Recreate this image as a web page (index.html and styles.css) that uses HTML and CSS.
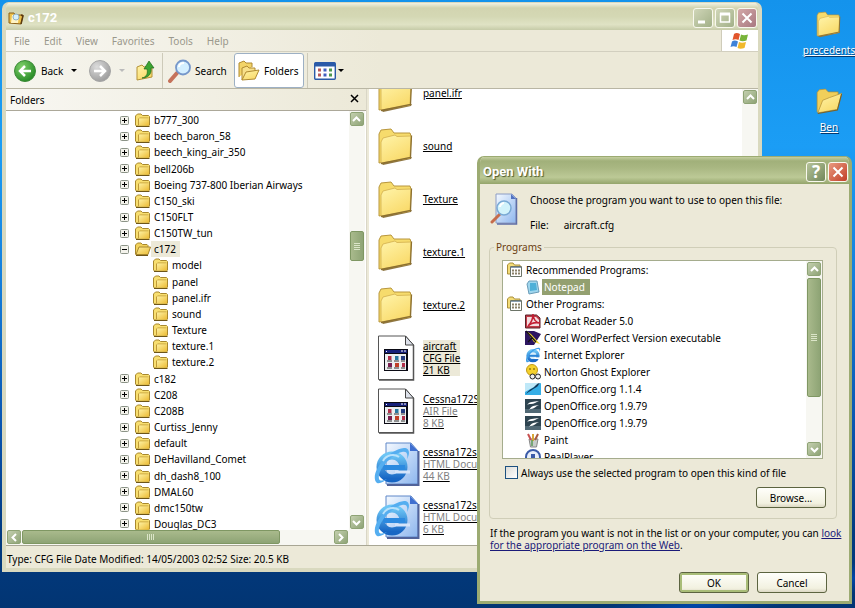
FILE: index.html
```html
<!DOCTYPE html>
<html lang="en">
<head>
<meta charset="utf-8">
<title>c172</title>
<link rel="stylesheet" href="styles.css">
</head>
<body>
<svg class="defs" aria-hidden="true">
  <defs>
    <linearGradient id="gy" x1="0" y1="0" x2="1" y2="1"><stop offset="0" stop-color="#fdf0a0"/><stop offset="1" stop-color="#ecbb34"/></linearGradient>
    <linearGradient id="gl" x1="0" y1="0" x2="0.6" y2="1"><stop offset="0" stop-color="#fff4aa"/><stop offset="1" stop-color="#f9da6a"/></linearGradient>
    <linearGradient id="gb" x1="0" y1="0" x2="1" y2="1"><stop offset="0" stop-color="#f4f9ff"/><stop offset="1" stop-color="#8db6ee"/></linearGradient>
    <linearGradient id="ge" x1="0" y1="0" x2="0" y2="1"><stop offset="0" stop-color="#6cc5f5"/><stop offset="1" stop-color="#1766c4"/></linearGradient>
    <radialGradient id="gg" cx="0.35" cy="0.3" r="0.8"><stop offset="0" stop-color="#7fd06a"/><stop offset="1" stop-color="#1f8420"/></radialGradient>
    <radialGradient id="gr" cx="0.35" cy="0.3" r="0.8"><stop offset="0" stop-color="#dcdcdc"/><stop offset="1" stop-color="#979797"/></radialGradient>
    <symbol id="folder" viewBox="0 0 16 16">
      <path d="M.5 13V4L2.500 2H6l1.500 1.500h6l1 1V13l-1 1H1.500z" fill="#f8df70" stroke="#a8882e"/>
      <path d="M3.500 13V7l1-1h9" fill="none" stroke="#c09a38"/>
      <path d="M4 6.500h10v7H4z" fill="url(#gy)"/>
      <path d="M1 14.500h13.500" stroke="#6d5518"/>
    </symbol>
    <symbol id="folder-open" viewBox="0 0 16 16">
      <path d="M.5 13.500V4L2.500 2H6l1.500 1.500H12l1 1V7" fill="#f2d25c" stroke="#a8882e"/>
      <path d="M1 13.500L4 6h11.500L13 13.500z" fill="url(#gy)" stroke="#a8882e"/>
      <path d="M1 14.500h12" stroke="#6d5518"/>
    </symbol>
    <symbol id="big-folder" viewBox="0 0 40 40">
      <path d="M5 37L36 31 35 33 7 39z" fill="#8f7744"/>
      <path d="M3 37V8L5 4l10-1 3 4 16 0 1 3-1 22z" fill="#f6db6c" stroke="#b8963c"/>
      <path d="M5 37V16l2-4 12-3 2 1.500 14-.5-1 22z" fill="url(#gl)" stroke="#d2ae4c" stroke-width=".8"/>
      <path d="M35.500 9.500l-1 22L5 37.500" fill="none" stroke="#8c7030" stroke-width="1.300"/>
    </symbol>
    <symbol id="big-folder-open" viewBox="0 0 40 40">
      <path d="M3 36V8L6 4l9-1 4 4h14v8" fill="#f1cf5a" stroke="#b28e34"/>
      <path d="M4 37L11 19l10-4 17-6-6 23z" fill="url(#gl)" stroke="#b28e34"/>
      <path d="M4 38l28-5 6-23" fill="none" stroke="#7c6226" stroke-width="1.500"/>
    </symbol>
    <symbol id="cfg" viewBox="0 0 40 46">
      <path d="M2.500 1h27l8 9v34.500h-35z" fill="#fff" stroke="#555"/>
      <path d="M37.500 10v35H3" fill="none" stroke="#555" stroke-width="1.500"/>
      <path d="M29.500 1v9h8z" fill="#dde1ea" stroke="#444"/>
      <path d="M8 14h24v22H8z" fill="#0a0a14"/><path d="M9 15h22v3H9z" fill="#16207a"/>
      <path d="M25 16h2m1 0h2M10 16.500h1" stroke="#fff"/>
      <path d="M9 19h21v16H9z" fill="#eceff0"/>
      <path d="M12 21h3.500v4H12zM26 28h3v4h-3z" fill="#b1304a"/><path d="M19 21h3.500v4H19z" fill="#2878a0"/><path d="M25 21h4v4h-4z" fill="#243b80"/><path d="M12 28h4v4h-4z" fill="#792050"/><path d="M19 28h4v4h-4z" fill="#c04028"/>
      <path d="M11 26h5m2 0h5m2 0h4M11 33h5m2 0h5m2 0h4" stroke="#333"/>
    </symbol>
    <symbol id="ie" viewBox="0 0 24 24">
      <circle cx="12" cy="13" r="7.500" fill="#d8eefb" stroke="url(#ge)" stroke-width="5"/>
      <path d="M6 13.200h14" stroke="#2b84d6" stroke-width="3"/>
      <path d="M14 15.500h9v2.500h-9z" fill="#fff"/>
      <path d="M2 22C-1 15 10 2 20 1c4 0 3 4 1 7 1-3 1-5-2-5C12 4 3 14 4 20c0 2 4 1 5 0-2 2-6 4-7 2z" fill="#3d9ee8"/>
    </symbol>
    <symbol id="html" viewBox="0 0 48 46">
      <path d="M13 2h25l7 8v33H13z" fill="url(#gb)" stroke="#5f87c8"/>
      <path d="M45.500 10v34H14" fill="none" stroke="#51639a" stroke-width="2"/>
      <path d="M37 2v8h8z" fill="#3f6fd0"/>
      <circle cx="19" cy="26" r="11.500" fill="none" stroke="url(#ge)" stroke-width="8"/>
      <path d="M10 26.500h22" stroke="#2c8ae0" stroke-width="5"/>
      <path d="M22 29.500h15v3H22z" fill="#d5e4fa"/>
      <path d="M3 41C-3 32 14 9 31 7c6 0 6 6 3 11 1-5 0-8-5-7C18 13 4 30 6 38c1 3 7 1 9-1-4 4-10 7-12 4z" fill="#55aef0"/>
      <path d="M10 20c3-6 11-8 16-4" fill="none" stroke="#b9e2fb" stroke-width="2"/>
    </symbol>
    <symbol id="plus" viewBox="0 0 9 9"><rect x=".5" y=".5" width="8" height="8" rx="1" fill="#f4f3ec" stroke="#8c9488"/><path d="M2 4.500h5M4.500 2v5" stroke="#000"/></symbol>
    <symbol id="minus" viewBox="0 0 9 9"><rect x=".5" y=".5" width="8" height="8" rx="1" fill="#f4f3ec" stroke="#8c9488"/><path d="M2 4.500h5" stroke="#000"/></symbol>
    <symbol id="chev" viewBox="0 0 9 9"><path d="M1 6l3.500-3.500L8 6" fill="none" stroke="#fff" stroke-width="2"/></symbol>
    <symbol id="progs" viewBox="0 0 16 16">
      <path d="M.5 12V3l2-2H6l1.500 2H13v9z" fill="#f3dc78" stroke="#a98e3a"/>
      <path d="M3.500 4.500h11v10h-11z" fill="#fff" stroke="#6c7468"/><path d="M4 5.500h10" stroke="#889cb0"/>
      <path d="M5 8.500h2m1 0h2m1 0h2M5 11.500h2m1 0h2m1 0h2" stroke="#8a8068" stroke-width="2"/>
    </symbol>
    <symbol id="oo" viewBox="0 0 16 16"><path d="M0 1h16v14H0z" fill="#2e4450"/><path d="M0 11h16v4H0z" fill="#506874"/><path d="M2 7c3-4 6-3 12-4-3 1-5 3-8 3-2 0-3 0-4 1zm2 5c3-5 5-4 10-5-3 1-5 4-8 4-1 0-1 0-2 1z" fill="#fff"/></symbol>
    <symbol id="lens" viewBox="0 0 24 24">
      <path d="M2 22l7-8" stroke="#c5725a" stroke-width="4" stroke-linecap="round"/>
      <circle cx="15" cy="8.500" r="7" fill="#d4efff" stroke="#7697ca" stroke-width="1.800"/>
      <path d="M11 8c0-3 3-4 5-4" fill="none" stroke="#fff" stroke-width="2"/>
    </symbol>
  </defs>
</svg>

<main class="desktop">
  <a class="shortcut precedents" href="#"><svg><use href="#big-folder"/></svg><span>precedents</span></a>
  <a class="shortcut ben" href="#"><svg><use href="#big-folder-open"/></svg><span>Ben</span></a>

  <section class="window" aria-label="c172">
    <header class="titlebar">
      <svg class="i16" viewBox="0 0 16 16"><path d="M1 13V3h5l1 2h8l-2 9z" fill="#edc04a" stroke="#8a5f18"/><path d="M4 5h7l-1 8H3z" fill="#fff4c4"/><circle cx="8" cy="7" r="3" fill="#d8f0fa" stroke="#8fb2c8"/><path d="M13 5l2 1-2 8" fill="none" stroke="#5a3a10" stroke-width="1.500"/></svg>
      <h1>c172</h1>
      <div class="caption-buttons">
        <button aria-label="Minimize"><svg viewBox="0 0 18 18"><path d="M4 13h7" stroke="#fff" stroke-width="3"/></svg></button>
        <button aria-label="Maximize"><svg viewBox="0 0 18 18"><path d="M4.500 5h9v8h-9z" fill="none" stroke="#fff" stroke-width="1.500"/><path d="M4 5h10" stroke="#fff" stroke-width="3"/></svg></button>
        <button class="close" aria-label="Close"><svg viewBox="0 0 18 18"><path d="M4.500 4.500l9 9m0-9l-9 9" stroke="#fff" stroke-width="2"/></svg></button>
      </div>
    </header>
    <nav class="menubar">
      <button>File</button><button>Edit</button><button>View</button><button>Favorites</button><button>Tools</button><button>Help</button>
      <span class="flag"><svg viewBox="0 0 20 18"><path d="M4 2c2-1.500 4-1 6 0L8.500 8C6.500 7 4.500 7 2.500 8z" fill="#e2562c"/><path d="M11 2.500c2 1 4 1 7 0L16.500 8.500c-3 1-5 1-7 0z" fill="#78b43a"/><path d="M2 9.500c2-1.500 4-1 6 0L6.500 15c-2-1-4-1-6 0z" fill="#3e82d8"/><path d="M9 10c2 1 4 1 7 0l-1.500 6c-3 1-5 1-7 0z" fill="#f1b92c"/></svg></span>
    </nav>
    <div class="toolbar">
      <button class="back"><svg class="i22" viewBox="0 0 22 22"><circle cx="11" cy="11" r="10.500" fill="url(#gg)" stroke="#3c8a38"/><path d="M17 11H6m5-5l-5 5 5 5" fill="none" stroke="#fff" stroke-width="2.500"/></svg><span>Back</span><i class="arrow"></i></button>
      <button class="forward" aria-label="Forward" disabled><svg class="i22" viewBox="0 0 22 22"><circle cx="11" cy="11" r="10.500" fill="url(#gr)" stroke="#a5a5a5"/><path d="M5 11h11m-5-5l5 5-5 5" fill="none" stroke="#fff" stroke-width="2.500"/></svg><i class="arrow dim"></i></button>
      <button class="up" aria-label="Up"><svg class="i22" viewBox="0 0 22 22"><path d="M2 20V7l5-2 2 2 8-1v11z" fill="url(#gl)" stroke="#b59236"/><path d="M7 18c5-1 6-5 5-9H9l5-8 5 7h-3c1 6-3 10-9 10z" fill="#3ca532" stroke="#1f6a1c" stroke-width=".7"/></svg></button>
      <button class="search"><svg class="i24"><use href="#lens"/></svg>Search</button>
      <button class="folders" aria-pressed="true"><svg class="i22" viewBox="0 0 22 22"><path d="M1 17V3l5-2 2 2 6 0v4" fill="#f3d468" stroke="#b08a30"/><path d="M4 20V8l5-2 2 2h6v3" fill="#f8e08a" stroke="#b08a30"/><path d="M4 20l4-8 13-2-4 9z" fill="url(#gl)" stroke="#b08a30"/></svg>Folders</button>
      <button class="views" aria-label="Views"><svg viewBox="0 0 22 18"><rect x=".7" y=".7" width="20.600" height="16.600" rx="1" fill="#fff" stroke="#2a5aa8" stroke-width="1.400"/><path d="M1 2.500h20" stroke="#2a5aa8" stroke-width="4"/><path d="M4 8h3m-3 5h3" stroke="#b85858" stroke-width="3"/><path d="M9.500 8h3m-3 5h3" stroke="#405fc0" stroke-width="3"/><path d="M15 8h3m-3 5h3" stroke="#4d984d" stroke-width="3"/></svg><i class="arrow"></i></button>
    </div>
    <div class="panes">
      <div class="folder-pane">
        <div class="pane-head"><h2>Folders</h2><button aria-label="Close folders"><svg viewBox="0 0 9 9"><path d="M1 1l7 7m0-7L1 8" stroke="#000" stroke-width="1.500"/></svg></button></div>
        <div class="tree-area">
          <ul class="tree">
            <li><svg class="box"><use href="#plus"/></svg><svg class="i16"><use href="#folder"/></svg><span>b777_300</span></li>
            <li><svg class="box"><use href="#plus"/></svg><svg class="i16"><use href="#folder"/></svg><span>beech_baron_58</span></li>
            <li><svg class="box"><use href="#plus"/></svg><svg class="i16"><use href="#folder"/></svg><span>beech_king_air_350</span></li>
            <li><svg class="box"><use href="#plus"/></svg><svg class="i16"><use href="#folder"/></svg><span>bell206b</span></li>
            <li><svg class="box"><use href="#plus"/></svg><svg class="i16"><use href="#folder"/></svg><span>Boeing 737-800 Iberian Airways</span></li>
            <li><svg class="box"><use href="#plus"/></svg><svg class="i16"><use href="#folder"/></svg><span>C150_ski</span></li>
            <li><svg class="box"><use href="#plus"/></svg><svg class="i16"><use href="#folder"/></svg><span>C150FLT</span></li>
            <li><svg class="box"><use href="#plus"/></svg><svg class="i16"><use href="#folder"/></svg><span>C150TW_tun</span></li>
            <li><svg class="box"><use href="#minus"/></svg><svg class="i16"><use href="#folder-open"/></svg><span class="current">c172</span></li>
            <li class="child"><svg class="i16"><use href="#folder"/></svg><span>model</span></li>
            <li class="child"><svg class="i16"><use href="#folder"/></svg><span>panel</span></li>
            <li class="child"><svg class="i16"><use href="#folder"/></svg><span>panel.ifr</span></li>
            <li class="child"><svg class="i16"><use href="#folder"/></svg><span>sound</span></li>
            <li class="child"><svg class="i16"><use href="#folder"/></svg><span>Texture</span></li>
            <li class="child"><svg class="i16"><use href="#folder"/></svg><span>texture.1</span></li>
            <li class="child"><svg class="i16"><use href="#folder"/></svg><span>texture.2</span></li>
            <li><svg class="box"><use href="#plus"/></svg><svg class="i16"><use href="#folder"/></svg><span>c182</span></li>
            <li><svg class="box"><use href="#plus"/></svg><svg class="i16"><use href="#folder"/></svg><span>C208</span></li>
            <li><svg class="box"><use href="#plus"/></svg><svg class="i16"><use href="#folder"/></svg><span>C208B</span></li>
            <li><svg class="box"><use href="#plus"/></svg><svg class="i16"><use href="#folder"/></svg><span>Curtiss_Jenny</span></li>
            <li><svg class="box"><use href="#plus"/></svg><svg class="i16"><use href="#folder"/></svg><span>default</span></li>
            <li><svg class="box"><use href="#plus"/></svg><svg class="i16"><use href="#folder"/></svg><span>DeHavilland_Comet</span></li>
            <li><svg class="box"><use href="#plus"/></svg><svg class="i16"><use href="#folder"/></svg><span>dh_dash8_100</span></li>
            <li><svg class="box"><use href="#plus"/></svg><svg class="i16"><use href="#folder"/></svg><span>DMAL60</span></li>
            <li><svg class="box"><use href="#plus"/></svg><svg class="i16"><use href="#folder"/></svg><span>dmc150tw</span></li>
            <li><svg class="box"><use href="#plus"/></svg><svg class="i16"><use href="#folder"/></svg><span>Douglas_DC3</span></li>
          </ul>
          <div class="vscroll tree-scroll">
            <button aria-label="Scroll up"><svg><use href="#chev"/></svg></button>
            <div class="track"><div class="thumb"></div></div>
            <button class="down" aria-label="Scroll down"><svg><use href="#chev"/></svg></button>
          </div>
        </div>
        <div class="hscroll">
          <button class="left" aria-label="Scroll left"><svg><use href="#chev"/></svg></button>
          <div class="track"><div class="thumb"></div></div>
          <button class="right" aria-label="Scroll right"><svg><use href="#chev"/></svg></button>
        </div>
      </div>
      <div class="file-pane">
        <ul class="files">
          <li><svg class="i40"><use href="#big-folder"/></svg><a href="#">panel.ifr</a></li>
          <li><svg class="i40"><use href="#big-folder"/></svg><a href="#">sound</a></li>
          <li><svg class="i40"><use href="#big-folder"/></svg><a href="#">Texture</a></li>
          <li><svg class="i40"><use href="#big-folder"/></svg><a href="#">texture.1</a></li>
          <li><svg class="i40"><use href="#big-folder"/></svg><a href="#">texture.2</a></li>
          <li><svg class="doc"><use href="#cfg"/></svg><a href="#" class="chosen">aircraft<br>CFG File<br>21 KB</a></li>
          <li><svg class="doc"><use href="#cfg"/></svg><a href="#">Cessna172SP.air<br><small>AIR File<br>8 KB</small></a></li>
          <li><svg class="web"><use href="#html"/></svg><a href="#">cessna172s_check<br><small>HTML Document<br>44 KB</small></a></li>
          <li><svg class="web"><use href="#html"/></svg><a href="#">cessna172s_ref<br><small>HTML Document<br>6 KB</small></a></li>
        </ul>
        <div class="vscroll">
          <button aria-label="Scroll up"><svg><use href="#chev"/></svg></button>
          <div class="track"></div>
          <button class="down" aria-label="Scroll down"><svg><use href="#chev"/></svg></button>
        </div>
      </div>
    </div>
    <footer class="status">Type: CFG File Date Modified: 14/05/2003 02:52 Size: 20.5 KB</footer>
  </section>

  <section class="dialog" role="dialog" aria-labelledby="dlg-title">
    <header class="titlebar">
      <h1 id="dlg-title">Open With</h1>
      <div class="caption-buttons">
        <button class="help" aria-label="Help">?</button>
        <button class="close" aria-label="Close"><svg viewBox="0 0 18 18"><path d="M4.500 4.500l9 9m0-9l-9 9" stroke="#fff" stroke-width="2"/></svg></button>
      </div>
    </header>
    <form class="dialog-body">
      <div class="intro">
        <svg class="intro-icon" viewBox="0 0 28 32"><path d="M6 1h16l4 4v25H6z" fill="url(#gb)" stroke="#8c9cc4"/><path d="M26.500 5v26H7" fill="none" stroke="#5e6ea6" stroke-width="1.500"/><path d="M21 1v5h5z" fill="#5272c0"/><path d="M2 29l8-8" stroke="#c56c4c" stroke-width="3" stroke-linecap="round"/><circle cx="14" cy="15" r="7" fill="#d2f3fb" stroke="#7aa9d4" stroke-width="1.500"/><path d="M10 14c0-2 2-4 4-4" fill="none" stroke="#fff" stroke-width="2"/></svg>
        <div><p>Choose the program you want to use to open this file:</p>
        <p class="file"><span>File:</span><span>aircraft.cfg</span></p></div>
      </div>
      <fieldset>
        <legend>Programs</legend>
        <div class="listbox">
          <ul>
            <li class="group"><svg class="i16"><use href="#progs"/></svg><span>Recommended Programs:</span></li>
            <li><svg class="i16" viewBox="0 0 16 16"><path d="M4 2h8l2 11-10 2L2 5z" fill="#9fd6ee" stroke="#6a9cb8"/><path d="M5 4h6l1 7-7 1z" fill="#4fb0d8"/></svg><span class="sel">Notepad</span></li>
            <li class="group"><svg class="i16"><use href="#progs"/></svg><span>Other Programs:</span></li>
            <li><svg class="i16" viewBox="0 0 16 16"><path d="M.5 2h11l3.500 3v10H.5z" fill="#c33a48" stroke="#5c2028"/><path d="M2 4h9l3 3v6H2z" fill="#f3dde0"/><path d="M3 13c3-3 5-7 5-12 0 5 3 9 7 9-5-1-9 0-12 3z" fill="none" stroke="#c31e34" stroke-width="1.500"/></svg><span>Acrobat Reader 5.0</span></li>
            <li><svg class="i16" viewBox="0 0 16 16"><path d="M0 1h16v14H0z" fill="#2d1660"/><path d="M9 15L16 4v11zM9 1h7v3z" fill="#fff"/><path d="M1 1l5 3 9 10-6-2z" fill="#f2d72e"/><path d="M1 1l10 11M3 12l4-4" stroke="#111" stroke-width="1.200"/></svg><span>Corel WordPerfect Version executable</span></li>
            <li><svg class="i16"><use href="#ie"/></svg><span>Internet Explorer</span></li>
            <li><svg class="i16" viewBox="0 0 16 16"><circle cx="7" cy="6" r="5.500" fill="#f5d12c" stroke="#c09a18"/><path d="M5 4v2m4-2v2" stroke="#665000"/><circle cx="7.500" cy="12.500" r="2.500" fill="#eee" stroke="#222"/><circle cx="13" cy="12.500" r="2.500" fill="#eee" stroke="#222"/></svg><span>Norton Ghost Explorer</span></li>
            <li><svg class="i16" viewBox="0 0 16 16"><path d="M0 2h16v12H0z" fill="#35aee6"/><path d="M0 2h16L0 11z" fill="#bfe8f8"/><path d="M1 13c4-6 7-5 9-8 2-2 3-3 5-3-2 2-2 4-5 5-3 2-5 3-9 6z" fill="#123a5c"/></svg><span>OpenOffice.org 1.1.4</span></li>
            <li><svg class="i16"><use href="#oo"/></svg><span>OpenOffice.org 1.9.79</span></li>
            <li><svg class="i16"><use href="#oo"/></svg><span>OpenOffice.org 1.9.79</span></li>
            <li><svg class="i16" viewBox="0 0 16 16"><path d="M4 7h9l-1.500 8h-6z" fill="#c6ccca" stroke="#888"/><path d="M6 8L3 2" stroke="#c85050" stroke-width="2"/><path d="M8 9V2" stroke="#d8a838" stroke-width="2"/><path d="M10 8l3-6" stroke="#a8583c" stroke-width="2"/><path d="M7 14V8" stroke="#5a9a58" stroke-width="1.500"/></svg><span>Paint</span></li>
            <li><svg class="i16" viewBox="0 0 16 16"><circle cx="8" cy="8" r="7" fill="#e9effa" stroke="#3a5ba8" stroke-width="2"/><path d="M6 5h4v6H6z" fill="#3a5ba8"/></svg><span>RealPlayer</span></li>
          </ul>
          <div class="vscroll list-scroll">
            <button type="button" aria-label="Scroll up"><svg><use href="#chev"/></svg></button>
            <div class="track"><div class="thumb"></div></div>
            <button type="button" class="down" aria-label="Scroll down"><svg><use href="#chev"/></svg></button>
          </div>
        </div>
        <div class="check"><input type="checkbox" id="always"><label for="always">Always use the selected program to open this kind of file</label></div>
        <div class="row-end"><button type="button" class="btn">Browse...</button></div>
      </fieldset>
      <p class="hint">If the program you want is not in the list or on your computer, you can <a href="#">look for the appropriate program on the Web</a>.</p>
      <div class="actions"><button type="button" class="btn primary">OK</button><button type="button" class="btn">Cancel</button></div>
    </form>
  </section>
</main>
</body>
</html>
```
FILE: styles.css
```css
* { box-sizing: border-box; }
body, h1, h2, p, ul { margin: 0; padding: 0; }
ul { list-style: none; }
body, button, input {
  font-family: Tahoma, "Noto Sans", "DejaVu Sans Condensed", sans-serif;
  font-size: 10px;
  line-height: 12px;
  color: #000;
}
button { margin: 0; padding: 0; border: 0; background: none; }
svg { display: block; flex: none; }
.defs { position: absolute; width: 0; height: 0; }
.i16 { width: 16px; height: 16px; }
.i22 { width: 22px; height: 22px; }
.i24 { width: 24px; height: 24px; }
.i40 { width: 40px; height: 40px; }

.desktop {
  position: relative;
  height: 100vh;
  overflow: hidden;
  background:
    linear-gradient(170deg, transparent 94%, #0046a8 96%, transparent 98%),
    linear-gradient(180deg, #1493ec 0, #1b9df5 24%, #1580dd 45%, #0a55b0 70%, #023a80 88%, #023573 100%);
}
.shortcut {
  position: absolute;
  right: 0;
  width: 52px;
  display: flex;
  flex-direction: column;
  align-items: center;
  gap: 6px;
  color: #fff;
  text-shadow: 1px 1px 1px #04386e;
}
.shortcut svg { width: 28px; height: 28px; }
.precedents { top: 10px; }
.ben { top: 87px; }

.window {
  position: absolute;
  left: 2px;
  top: 2px;
  right: 93px;
  bottom: 36px;
  display: flex;
  flex-direction: column;
  border: solid #d9d9bf;
  border-width: 1px 4px 4px;
  border-radius: 7px 7px 0 0;
  background: #ece9d8;
  overflow: hidden;
}
.titlebar {
  display: flex;
  align-items: center;
  gap: 4px;
  height: 27px;
  flex: none;
  padding: 3px 1px 0 2px;
}
.titlebar h1 {
  flex: 1;
  font-family: Roboto, sans-serif;
  font-size: 13px;
  line-height: 16px;
  font-weight: bold;
  color: #fff;
}
.window .titlebar { background: linear-gradient(#f2f2e2 0, #d2d4b0 5px, #d4d8b4 50%, #dfe2c4 80%, #c6cba8); }
.caption-buttons { display: flex; gap: 2px; }
.caption-buttons button {
  width: 20px;
  height: 20px;
  border: 1px solid #f8f8ee;
  border-radius: 3px;
  background: linear-gradient(135deg, #d0d6b8, #a2b088);
}
.window .close { background: linear-gradient(135deg, #d3a8a8, #a87880); }

.menubar {
  display: flex;
  align-items: stretch;
  height: 22px;
  flex: none;
  gap: 14px;
  padding-left: 8px;
  border-bottom: 1px solid #d2cfbf;
  background: linear-gradient(90deg, #f8f7f2, #ece9d8 50%);
}
.menubar button { color: #9a988c; }
.flag {
  margin-left: auto;
  width: 37px;
  display: grid;
  place-items: center;
  background: #fff;
  border-left: 1px solid #cfccba;
}
.flag svg { width: 20px; height: 18px; }
.toolbar {
  display: flex;
  align-items: stretch;
  height: 37px;
  flex: none;
  padding-top: 1px;
  border-bottom: 1px solid #b9b6a4;
  background: linear-gradient(90deg, #f6f5ee, #ece9d8 50%);
}
.toolbar button { display: flex; align-items: center; gap: 5px; }
.arrow { border: solid transparent; border-width: 3px 3px 0; border-top-color: #000; margin-left: 3px; }
.arrow.dim { border-top-color: #bbb; }
.toolbar .back { padding-left: 8px; width: 76px; }
.toolbar .forward { padding-left: 7px; width: 46px; }
.toolbar .up { padding-left: 7px; width: 35px; border-right: 1px solid #cdcab9; }
.toolbar .search { padding-left: 5px; width: 71px; gap: 3px; }
.toolbar .folders {
  width: 70px;
  padding-left: 3px;
  background: #fff;
  border: 1px solid #9db0c4;
  border-radius: 3px;
  gap: 4px;
}
.toolbar .views { margin-left: 3px; border-left: 1px solid #cdcab9; padding-left: 6px; gap: 0; }
.views svg { width: 22px; height: 18px; }
.views .arrow { margin-left: 2px; }

.panes { flex: 1; display: flex; min-height: 0; border-bottom: 1px solid #a8a694; }
.folder-pane { width: 48%; display: flex; flex-direction: column; background: #fff; border-right: 1px solid #d9d6c6; }
.pane-head {
  display: flex;
  align-items: center;
  justify-content: space-between;
  height: 22px;
  flex: none;
  padding: 1px 7px 0 4px;
  background: linear-gradient(90deg, #f8f7f2, #ece9d8);
  border-bottom: 1px solid #aca899;
}
.pane-head h2 { font-size: 10px; font-weight: normal; }
.pane-head svg { width: 9px; height: 9px; margin-bottom: 4px; }
.tree-area { flex: 1; display: flex; min-height: 0; }
.tree { flex: 1; display: flex; flex-direction: column; margin-bottom: -2px; padding: 1px 0 0 114px; }
.tree li { flex: 1; min-height: 0; display: flex; align-items: center; }
.tree .box { width: 9px; height: 9px; margin-right: 6px; }
.tree .child { padding-left: 33px; }
.tree span { padding: 2px 4px 2px 3px; white-space: nowrap; }
.tree .current { background: #ece9d8; }

.vscroll { width: 16px; flex: none; display: flex; flex-direction: column; padding: 1px; background: #f7f7f2; }
.vscroll button, .hscroll button {
  width: 14px;
  height: 14px;
  flex: none;
  display: grid;
  place-items: center;
  border: 1px solid #8ea375;
  border-radius: 2px;
  background: linear-gradient(135deg, #c3cfae, #8ea376);
}
.vscroll button svg, .hscroll button svg { width: 9px; height: 9px; }
.down svg { rotate: 180deg; }
.left svg { rotate: 270deg; }
.right svg { rotate: 90deg; }
.track { flex: 1; display: flex; flex-direction: column; }
.thumb { border: 1px solid #7f9763; border-radius: 2px; background: linear-gradient(90deg, #a9ba8c, #8ea475); display: grid; place-items: center; }
.thumb::after { content: ""; width: 6px; height: 7px; background: repeating-linear-gradient(#dbe5c8 0 1px, transparent 1px 2px); }
.tree-scroll .thumb { margin-top: 105px; height: 30px; }
.tree-scroll { margin-right: 1px; }
.hscroll { height: 15px; flex: none; display: flex; padding: 0 18px 1px 1px; background: #f7f7f2; }
.hscroll .track { flex-direction: row; padding: 0 1px; }
.hscroll .thumb { width: 83%; background: linear-gradient(#a9ba8c, #8ea475); }
.hscroll .thumb::after { width: 8px; height: 6px; background: repeating-linear-gradient(90deg, #dbe5c8 0 1px, transparent 1px 2px); }

.file-pane { flex: 1; display: flex; min-width: 0; margin-left: 2px; background: #fff; overflow: hidden; }
.files { flex: 1; min-width: 0; margin-top: -23px; padding-left: 7px; }
.files li { display: grid; grid-template-columns: 47px 1fr; align-items: center; justify-items: start; height: 53px; }
.files a { color: #000; white-space: nowrap; }
.files small { font-size: 10px; color: #808080; }
.files .chosen { background: #ece9d8; }
.doc { width: 40px; height: 46px; }
.web { width: 48px; height: 46px; margin-left: -3px; }

.status { height: 22px; flex: none; padding: 7px 1px; background: #ece9d8; }

.dialog {
  position: absolute;
  left: 477px;
  right: 3px;
  top: 156px;
  border: solid #9cab72;
  border-width: 1px 3px 3px;
  border-radius: 7px 7px 0 0;
  background: #ece9d8;
  overflow: hidden;
}
.dialog .titlebar { padding-left: 3px; background: linear-gradient(#c5cfa0 0, #a1b07a 4px, #a9b782 40%, #bcc996 75%, #94a46b); }
.dialog .titlebar h1 { text-shadow: 1px 1px 1px #4c5a2c; }
.dialog .caption-buttons button { background: linear-gradient(135deg, #b6c39a, #72875a); }
.dialog .caption-buttons .close { background: linear-gradient(135deg, #e99a80, #c23f28); }
.caption-buttons .help { color: #fff; font-size: 17px; line-height: 18px; font-weight: bold; }
.dialog-body { display: flex; flex-direction: column; padding: 9px 4px 8px 9px; }
.intro { display: flex; gap: 12px; height: 48px; }
.intro-icon { width: 28px; height: 32px; margin-left: 1px; }
.intro p { padding-top: 1px; }
.intro .file { display: flex; gap: 15px; padding-top: 13px; }
fieldset {
  min-width: 0;
  margin: 0 8px 0 0;
  padding: 7px 10px 10px 12px;
  border: 1px solid #d0ceb8;
  border-radius: 4px;
}
legend { margin-left: -8px; padding: 0 2px; color: #6b3d10; }
.listbox { display: flex; height: 199px; overflow: hidden; margin-right: 3px; border: 1px solid #a5ac8d; background: #fff; }
.listbox ul { flex: 1; padding: 0 0 0 4px; }
.listbox li { display: flex; align-items: center; gap: 1px; height: 17px; padding-left: 18px; }
.listbox .group { padding-left: 0; }
.listbox li span { padding: 2px; white-space: nowrap; }
.listbox .sel { background: #93a070; color: #fff; padding-right: 5px; }
.list-scroll { padding: 1px 1px 2px; }
.list-scroll .thumb { height: 119px; margin-top: 2px; }
.check { display: flex; align-items: center; gap: 3px; padding: 7px 0 0 3px; }
.check input { appearance: none; width: 13px; height: 13px; margin: 0; border: 1px solid #1c5180; background: linear-gradient(135deg, #dcdcd7, #fff); }
.row-end, .actions { display: flex; justify-content: flex-end; gap: 8px; }
.row-end { padding-top: 8px; }
.btn { width: 70px; height: 21px; border: 1px solid #5c6440; border-radius: 3px; background: linear-gradient(#fffffb, #f2f1e0 80%, #dcd8c4); }
.btn.primary { box-shadow: inset 0 0 0 2px #a9bd78; }
.hint { padding: 8px 0 0 1px; }
.hint a { color: #1a1a78; }
.actions { padding: 21px 18px 0 0; }
```
